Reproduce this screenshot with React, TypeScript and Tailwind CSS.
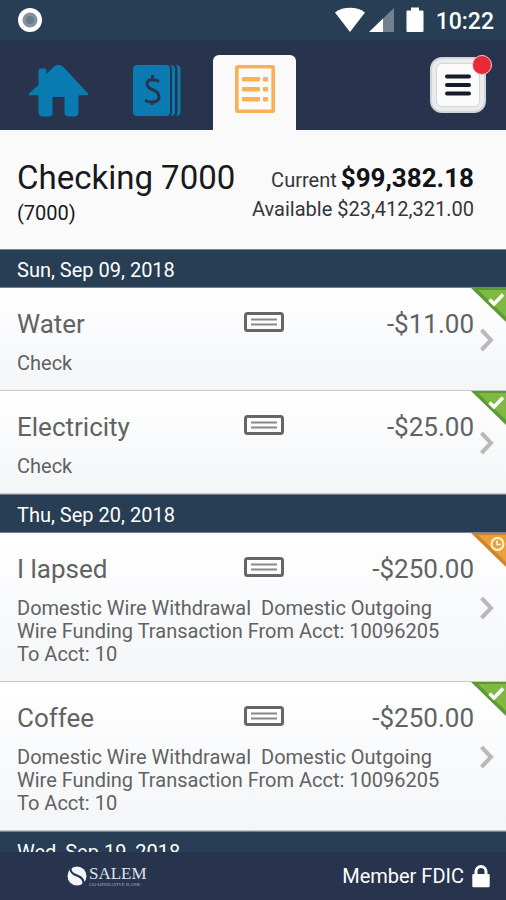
type Status = "cleared" | "pending";

interface Transaction {
  name: string;
  amount: string;
  detail: string;
  status: Status;
}

interface Day {
  date: string;
  transactions: Transaction[];
}

const wireDetail =
  "Domestic Wire Withdrawal  Domestic Outgoing Wire Funding Transaction From Acct: 10096205 To Acct: 10";

const days: Day[] = [
  {
    date: "Sun, Sep 09, 2018",
    transactions: [
      { name: "Water", amount: "-$11.00", detail: "Check", status: "cleared" },
      { name: "Electricity", amount: "-$25.00", detail: "Check", status: "cleared" },
    ],
  },
  {
    date: "Thu, Sep 20, 2018",
    transactions: [
      { name: "I lapsed", amount: "-$250.00", detail: wireDetail, status: "pending" },
      { name: "Coffee", amount: "-$250.00", detail: wireDetail, status: "cleared" },
    ],
  },
  { date: "Wed, Sep 19, 2018", transactions: [] },
];

function StatusBar() {
  return (
    <div className="flex h-10 shrink-0 items-center justify-between bg-[#273e54] pr-3 pl-4 text-white">
      <svg width="28" height="28" viewBox="0 0 28 28">
        <circle cx="14" cy="14" r="12" fill="#fff" />
        <circle cx="14" cy="14" r="7.5" fill="#84929f" />
        <circle cx="14" cy="14" r="4" fill="#6a7b8a" />
      </svg>
      <div className="flex items-center">
        <svg width="30" height="26" viewBox="0 0 30 26" fill="#fff">
          <path d="M0 5.500C4.500 2 9.500.8 15 .8S25.500 2 30 5.500L15 25Z" />
        </svg>
        <svg className="ml-1" width="25" height="26" viewBox="0 0 25 26" fill="#fff">
          <path d="M25 1V25H14V11.500Z" opacity=".35" />
          <path d="M0 25L14 11.500V25Z" />
        </svg>
        <svg className="ml-3" width="18" height="26" viewBox="0 0 18 26" fill="#fff">
          <path d="M5 0.500h8v3h3.500q1 0 1 1V24q0 1-1 1H1.500q-1 0-1-1V4.500q0-1 1-1H5Z" />
        </svg>
        <span className="ml-3 pt-1 text-[23px] leading-7 font-medium">10:22</span>
      </div>
    </div>
  );
}

function TabBar() {
  return (
    <nav className="flex h-[90px] shrink-0 items-end bg-[#28334d]">
      <button className="ml-[29px] flex h-[78px] w-[60px] items-center justify-center" aria-label="Home">
        <svg width="60" height="54" viewBox="0 0 60 54" fill="#0a7bb0">
          <path d="M9.500 21V6q0-1.500 1.500-1.500h5q1.500 0 1.500 1.500v4L25 2.600Q29.500-1 34 2.600L59 29.500q.8 1.700-1 1.700H49.500V48q0 4.500-4.500 4.500H40q-4.500 0-4.500-4V33H23.500V48.500q0 4-4 4H14.500q-5 0-5-4.500V31.200H1q-1.800 0-1-1.700Z" />
        </svg>
      </button>
      <button className="ml-11 flex h-[78px] w-12 items-center justify-center" aria-label="Accounts">
        <svg width="48" height="54" viewBox="0 0 48 54" fill="#0a7bb0">
          <rect x="0" y="1" width="37" height="51" rx="4" />
          <path d="M37 1q5 0 5 4V48q0 4-5 4q2-1 2-4V5q0-3-2-4Z" />
          <path d="M42.500 1q5 0 5 4V48q0 4-5 4q2-1 2-4V5q0-3-2-4Z" />
          <path
            d="M26 17.500q-3-1.800-6.500-1.800q-5.500 0-5.500 4.300q0 3.400 5.500 5.700q6.500 2.600 6.500 7q0 5.300-7 5.300q-4 0-7-1.800M19.500 11v4.700M19 38v3"
            fill="none"
            stroke="#28334d"
            strokeWidth="3"
          />
        </svg>
      </button>
      <button
        className="ml-8 flex h-[75px] w-[83px] justify-center rounded-t-md bg-[#fafafa] pt-[10px]"
        aria-label="Transactions"
      >
        <svg width="40" height="48" viewBox="0 0 40 48" fill="#fbb055">
          <rect x="1.800" y="1.800" width="36.400" height="44.400" rx="1" fill="none" stroke="#fbb055" strokeWidth="3.600" />
          <rect x="7" y="12" width="18" height="4.500" rx="1" />
          <rect x="28" y="12" width="5" height="4.500" rx="1" />
          <rect x="7" y="22" width="18" height="4.500" rx="1" />
          <rect x="28" y="22" width="5" height="4.500" rx="1" />
          <rect x="7" y="32" width="18" height="4.500" rx="1" />
          <rect x="28" y="32" width="5" height="4.500" rx="1" />
        </svg>
      </button>
      <button
        className="relative mr-5 mb-[17px] ml-auto flex size-14 items-center justify-center rounded-xl border-2 border-[#d2d4d8] bg-[#eaebec]"
        aria-label="Menu"
      >
        <span className="flex size-11 items-center justify-center rounded-md border border-[#d6d7d9] bg-[#fbfbfb]">
          <svg width="28" height="24" viewBox="0 0 28 24" stroke="#151b2b" strokeWidth="4" strokeLinecap="round">
            <path d="M3 3.500H25M3 12H25M3 20.500H25" />
          </svg>
        </span>
        <span className="absolute -top-1 -right-2 size-5 rounded-full border border-[#f6c9cd] bg-[#e8293a]" />
      </button>
    </nav>
  );
}

function AccountSummary() {
  return (
    <section className="flex h-[119px] shrink-0 justify-between bg-[#fafafa] pt-7 pr-8 pl-[17px] text-[#17191c]">
      <div>
        <h1 className="text-[33px] leading-10">Checking 7000</h1>
        <p className="text-xl leading-[30px]">(7000)</p>
      </div>
      <div className="pt-1 text-right text-[#33363a]">
        <p className="flex items-baseline justify-end gap-1 text-xl leading-8">
          Current <strong className="text-[26px] font-bold text-[#111316]">$99,382.18</strong>
        </p>
        <p className="text-xl leading-[26px]">Available $23,412,321.00</p>
      </div>
    </section>
  );
}

function StatusCorner({ status }: { status: Status }) {
  return (
    <svg className="absolute top-0 right-0" width="35" height="34" viewBox="0 0 35 34">
      <title>{status}</title>
      {status === "cleared" ? (
        <>
          <path d="M0 0H35V34Z" fill="#5d9a35" />
          <path d="M7 2H35V29Z" fill="#7fb942" />
          <path d="M18.500 11.500L23 16L32 6.500" fill="none" stroke="#fff" strokeWidth="3.600" />
        </>
      ) : (
        <>
          <path d="M0 0H35V34Z" fill="#cf8428" />
          <path d="M7 2H35V29Z" fill="#eba136" />
          <circle cx="26.500" cy="11" r="6" fill="none" stroke="#fff3dc" strokeWidth="2" />
          <path d="M26 7.500V11.500H30" fill="none" stroke="#fff3dc" strokeWidth="1.600" />
        </>
      )}
    </svg>
  );
}

function CheckIcon() {
  return (
    <svg width="40" height="20" viewBox="0 0 40 20" fill="none" stroke="#666" className="mt-1">
      <rect x="1.500" y="1.500" width="37" height="17" rx="2" strokeWidth="3" />
      <path d="M7 7.500H33M7 12.500H33" strokeWidth="1.800" stroke="#888" />
    </svg>
  );
}

function TransactionRow({ name, amount, detail, status }: Transaction) {
  return (
    <li className="relative border-b border-[#c6c8ca] bg-linear-to-b from-white to-[#f3f5f7]">
      <a href="#" className="flex items-center gap-[6px] pt-5 pr-3 pb-[15px] pl-[17px] text-[#626262]">
        <div className="min-w-0 flex-1">
          <div className="mb-3 grid grid-cols-[1fr_40px_190px] text-[26px] leading-8">
            <h3>{name}</h3>
            <CheckIcon />
            <span className="text-right">{amount}</span>
          </div>
          <p className="pr-6 text-xl leading-[23px] whitespace-pre-wrap">{detail}</p>
        </div>
        <svg className="mb-1" width="14" height="24" viewBox="0 0 14 24" fill="none" stroke="#b9b9b9" strokeWidth="4">
          <path d="M1.500 2L11 12L1.500 22" />
        </svg>
      </a>
      <StatusCorner status={status} />
    </li>
  );
}

function Footer() {
  return (
    <footer className="flex h-12 shrink-0 items-center justify-between bg-[#28334d] pr-4 pl-[67px] text-white">
      <div className="flex items-center gap-[2px]">
        <svg width="20" height="20" viewBox="0 0 20 20">
          <circle cx="10" cy="10" r="9.500" fill="#f3f5fa" />
          <path d="M4 0C2 6 6 8 10 9.500S18 14 16 20" fill="none" stroke="#28334d" strokeWidth="2.200" />
        </svg>
        <div className="font-['Liberation_Serif',serif]">
          <div className="text-[17px] leading-4 text-[#dfe3ee]">SALEM</div>
          <div className="text-[5px] leading-[5px] text-[#a9b1c6]">CO-OPERATIVE BANK</div>
        </div>
      </div>
      <div className="flex items-center gap-2 text-xl leading-7">
        Member FDIC
        <svg width="18" height="24" viewBox="0 0 18 24" fill="#fff">
          <path d="M1.500 10H2.500V7.500a6.500 6.500 0 0 1 13 0V10h1q1.200 0 1.200 1.200V22q0 1.200-1.200 1.200H1.500Q.3 23.200.3 22V11.200Q.3 10 1.500 10ZM5.500 10h7V7.500a3.500 3.500 0 0 0-7 0Z" />
        </svg>
      </div>
    </footer>
  );
}

export default function App() {
  return (
    <div className="flex h-screen flex-col bg-[#fafafa] font-[Roboto,sans-serif]">
      <StatusBar />
      <TabBar />
      <AccountSummary />
      <main className="min-h-0 flex-1 overflow-hidden">
        {days.map((day) => (
          <section key={day.date}>
            <h2 className="h-[39px] border-y border-[#77808c] bg-[#273e54] pl-[17px] text-xl leading-[41px] text-white">
              {day.date}
            </h2>
            <ul>
              {day.transactions.map((tx) => (
                <TransactionRow key={tx.name} {...tx} />
              ))}
            </ul>
          </section>
        ))}
      </main>
      <Footer />
    </div>
  );
}
